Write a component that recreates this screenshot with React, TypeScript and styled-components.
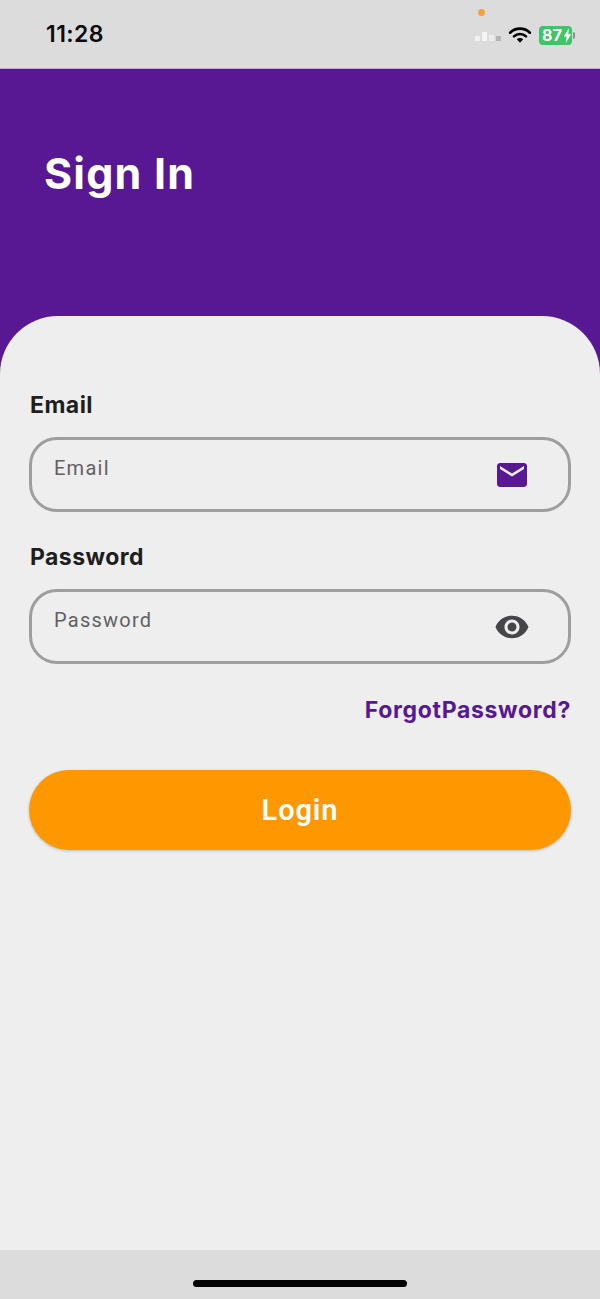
import React from "react";
import styled, { createGlobalStyle } from "styled-components";
import { MdEmail, MdVisibility } from "react-icons/md";

const GlobalStyle = createGlobalStyle`
  html, body {
    margin: 0;
    padding: 0;
    background: #eeeeee;
  }
  * {
    box-sizing: border-box;
  }
`;

const SignIn: React.FC = () => {
  return (
    <Page>
      <GlobalStyle />
      <StatusBar>
        <Clock>11:28</Clock>
        <CameraDot />
        <StatusIcons>
          <SignalBars>
            <Bar $h={5} $c="#f0f0f0" />
            <Bar $h={9} $c="#f4f4f4" />
            <Bar $h={6} $c="#ececec" />
            <Bar $h={5} $c="#b4b4b4" />
          </SignalBars>
          <svg width="24" height="18" viewBox="0 0 26 20">
            <path d="M2 7.5a15.5 15.5 0 0 1 22 0" fill="none" stroke="#000" strokeWidth="2.8" strokeLinecap="round" />
            <path d="M6.3 11.6a9.5 9.5 0 0 1 13.4 0" fill="none" stroke="#000" strokeWidth="2.8" strokeLinecap="round" />
            <path d="M13 18.6l-3.6-3.8a5 5 0 0 1 7.2 0z" fill="#000" />
          </svg>
          <Battery>
            <BatteryBody>
              <BatteryLevel>87</BatteryLevel>
              <svg width="9" height="15" viewBox="0 0 9 16">
                <path d="M6 0L0.5 9h3L2.6 16 8.5 6.6h-3.2z" fill="#fff" />
              </svg>
            </BatteryBody>
            <BatteryCap />
          </Battery>
        </StatusIcons>
      </StatusBar>

      <Purple>
        <Header>
          <Title>Sign In</Title>
        </Header>
        <Sheet>
          <Field>
            <FieldLabel>Email</FieldLabel>
            <InputBox>
              <TextInput placeholder="Email" type="text" />
              <IconSlot $color="#581894">
                <MdEmail size={36} />
              </IconSlot>
            </InputBox>
          </Field>
          <Field>
            <FieldLabel>Password</FieldLabel>
            <InputBox>
              <TextInput placeholder="Password" type="password" />
              <IconSlot $color="#46464a">
                <MdVisibility size={36} />
              </IconSlot>
            </InputBox>
          </Field>
          <Forgot>ForgotPassword?</Forgot>
          <LoginButton type="button">Login</LoginButton>
        </Sheet>
      </Purple>

      <HomeBar>
        <HomeIndicator />
      </HomeBar>
    </Page>
  );
};

export default SignIn;

const Page = styled.div`
  width: 600px;
  height: 1299px;
  display: flex;
  flex-direction: column;
  overflow: hidden;
  position: relative;
  font-family: Inter, "Liberation Sans", sans-serif;
`;

// 상단 상태바
const StatusBar = styled.div`
  height: 69px;
  flex: none;
  background: #dcdcdc;
  display: flex;
  align-items: center;
  justify-content: space-between;
  padding: 2px 25px 0 46px;
  border-bottom: 1px solid #c2a6d8;
`;

const Clock = styled.span`
  font-size: 23px;
  font-weight: 600;
  color: #0c0c0c;
  letter-spacing: 0.4px;
  margin-top: -2px;
`;

const CameraDot = styled.span`
  position: absolute;
  top: 9px;
  left: 478px;
  width: 7px;
  height: 7px;
  border-radius: 50%;
  background: #f7a33b;
`;

const StatusIcons = styled.div`
  display: flex;
  align-items: center;
  gap: 7px;
`;

const SignalBars = styled.div`
  display: flex;
  align-items: flex-end;
  gap: 2px;
  height: 9px;
  margin-top: 3px;
`;

const Bar = styled.span<{ $h: number; $c: string }>`
  width: 5px;
  height: ${(p) => p.$h}px;
  background: ${(p) => p.$c};
`;

const Battery = styled.div`
  display: flex;
  align-items: center;
  gap: 1px;
`;

const BatteryBody = styled.div`
  width: 33px;
  height: 19px;
  border-radius: 4px;
  background: #3fc468;
  display: flex;
  align-items: center;
  padding-left: 3px;

  svg {
    flex: none;
  }
`;

const BatteryLevel = styled.span`
  color: #fff;
  font-size: 16px;
  font-weight: 700;
  line-height: 19px;
  letter-spacing: 0.4px;
`;

const BatteryCap = styled.span`
  width: 2px;
  height: 7px;
  border-radius: 0 2px 2px 0;
  background: #8c8c8c;
`;

// 보라색 영역
const Purple = styled.div`
  flex: 1;
  background: #581894;
  display: flex;
  flex-direction: column;
  min-height: 0;
`;

const Header = styled.div`
  height: 247px;
  flex: none;
  padding: 79px 0 0 44px;
`;

const Title = styled.h1`
  margin: 0;
  font-size: 43px;
  line-height: 50px;
  font-weight: 700;
  color: #fff;
  letter-spacing: 1.2px;
`;

const Sheet = styled.div`
  flex: 1;
  background: #eeeeee;
  border-radius: 58px 58px 0 0;
  padding: 74px 29px 0;
  display: flex;
  flex-direction: column;
`;

const Field = styled.div`
  display: flex;
  flex-direction: column;
  margin-bottom: 30px;
`;

const FieldLabel = styled.label`
  font-size: 23px;
  line-height: 30px;
  font-weight: 700;
  color: #1e1e1e;
  margin-bottom: 17px;
  padding-left: 1px;
  letter-spacing: 0.45px;
`;

const InputBox = styled.div`
  height: 75px;
  border: 3px solid #9e9e9e;
  border-radius: 28px;
  display: flex;
  align-items: center;
  padding: 0 22px;
`;

const TextInput = styled.input`
  flex: 1;
  min-width: 0;
  border: none;
  outline: none;
  background: transparent;
  height: 100%;
  padding: 0 0 14px 0;
  font-family: Roboto, "Liberation Sans", sans-serif;
  font-size: 20px;
  letter-spacing: 1.25px;
  color: #555;

  &::placeholder {
    color: #616161;
    opacity: 1;
  }
`;

const IconSlot = styled.span<{ $color: string }>`
  display: flex;
  color: ${(p) => p.$color};
  margin-right: 16px;
`;

const Forgot = styled.a`
  align-self: flex-end;
  margin-top: 1px;
  font-size: 23px;
  line-height: 30px;
  font-weight: 700;
  color: #581894;
  letter-spacing: 0.67px;
`;

const LoginButton = styled.button`
  margin-top: 45px;
  height: 80px;
  border: none;
  border-radius: 40px;
  background: #ff9800;
  color: #fff;
  font-family: Roboto, "Liberation Sans", sans-serif;
  font-size: 29px;
  font-weight: 600;
  letter-spacing: 0.9px;
  box-shadow: 0 1px 3px rgba(0, 0, 0, 0.22);
`;

// 하단 홈 인디케이터
const HomeBar = styled.div`
  height: 49px;
  flex: none;
  background: #dcdcdc;
  display: flex;
  justify-content: center;
  padding-top: 30px;
`;

const HomeIndicator = styled.span`
  width: 214px;
  height: 7px;
  border-radius: 4px;
  background: #000;
`;
